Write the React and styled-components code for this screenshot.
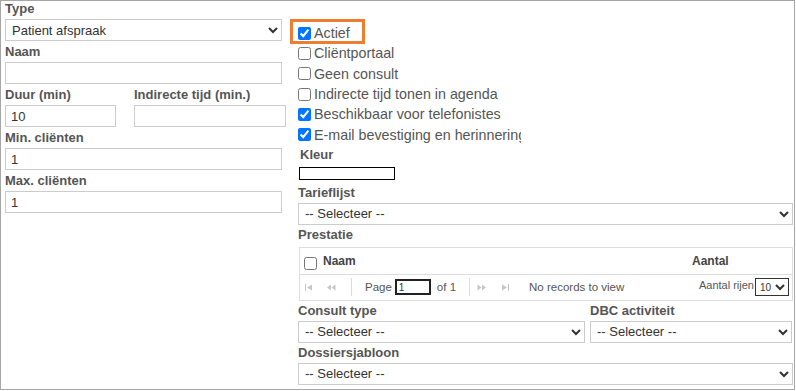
import React from "react";
import styled, { createGlobalStyle } from "styled-components";

const GlobalStyle = createGlobalStyle`
  html, body {
    margin: 0;
    padding: 0;
    background: #fff;
  }
  body {
    font-family: Arial, "Liberation Sans", sans-serif;
  }
`;

const Frame = styled.div`
  box-sizing: border-box;
  width: 795px;
  height: 390px;
  border: 1px solid #a6a6a6;
  padding-left: 4px;
  display: flex;
  gap: 11px;
  overflow: hidden;
`;

const LeftCol = styled.div`
  width: 282px;
  display: flex;
  flex-direction: column;
  gap: 3px;
`;

const RightCol = styled.div`
  width: 495px;
  padding-top: 22px;
  display: flex;
  flex-direction: column;
`;

const Field = styled.div`
  display: flex;
  flex-direction: column;
  width: ${(p) => p.$width || "auto"};
  margin-top: ${(p) => p.$top || 0}px;
`;

const Label = styled.label`
  display: block;
  font-size: 13px;
  font-weight: bold;
  line-height: 16px;
  margin-bottom: 2px;
  padding-left: ${(p) => p.$indent || 0}px;
  color: #555;
  white-space: nowrap;
`;

const TextInput = styled.input`
  box-sizing: border-box;
  height: 22px;
  width: 100%;
  border: 1px solid #ccc;
  border-radius: 0;
  padding: 0 5px;
  font-family: Arial, "Liberation Sans", sans-serif;
  font-size: 13px;
  color: #333;
  outline: none;
`;

const Select = styled.select`
  box-sizing: border-box;
  height: 22px;
  width: 100%;
  border: 1px solid #ccc;
  border-radius: 0;
  background: #fff;
  padding: 0 2px;
  font-family: Arial, "Liberation Sans", sans-serif;
  font-size: 13px;
  color: #333;
  outline: none;
`;

const TwoCols = styled.div`
  display: grid;
  grid-template-columns: ${(p) => p.$cols};
  column-gap: ${(p) => p.$gap}px;
`;

const CheckList = styled.div`
  display: flex;
  flex-direction: column;
`;

const CheckRow = styled.label`
  display: flex;
  align-items: center;
  width: 223px;
  height: 20.34px;
  overflow: hidden;
  font-size: 14.3px;
  color: #555;
  white-space: nowrap;
`;

const Highlight = styled.div`
  position: relative;
  &::after {
    content: "";
    position: absolute;
    left: -8px;
    top: -4.3px;
    width: 69px;
    height: 19px;
    border: 3px solid #ed7d31;
    pointer-events: none;
  }
`;

const Check = styled.input.attrs({ type: "checkbox" })`
  width: 13px;
  height: 13px;
  margin: 0 3px 0 0;
  flex: none;
`;

const Swatch = styled.div`
  box-sizing: border-box;
  width: 96px;
  height: 13px;
  margin: 2px 0 5px 1px;
  border: 1px solid #000;
  background: #fff;
`;

const Grid = styled.div`
  box-sizing: border-box;
  width: 494px;
  margin: 2px 0 2px 1px;
  border: 1px solid #ddd;
`;

const GridHead = styled.div`
  display: flex;
  align-items: center;
  height: 26px;
  padding-left: 4px;
  border-bottom: 1px solid #ddd;
  font-size: 12px;
  font-weight: bold;
  color: #444;
`;

const HeadCheck = styled(Check)`
  margin: 6px 6px 0 0;
`;

const HeadCell = styled.div`
  flex: ${(p) => (p.$grow ? 1 : "none")};
  width: ${(p) => (p.$w ? `${p.$w}px` : "auto")};
`;

const Pager = styled.div`
  display: flex;
  align-items: center;
  height: 25px;
  padding: 0 3px 0 1px;
  font-size: 11.5px;
  color: #555;
  white-space: nowrap;
`;

const PagerIcon = styled.span`
  display: flex;
  justify-content: center;
  align-items: center;
  width: 15px;
  height: 16px;
  margin-left: ${(p) => p.$ml || 0}px;
  color: #c6c6c6;
`;

const Sep = styled.span`
  width: 1px;
  height: 18px;
  background: #ddd;
  margin-left: ${(p) => p.$ml || 0}px;
`;

const PagerText = styled.span`
  margin-left: ${(p) => p.$ml || 0}px;
  font-size: ${(p) => p.$size || 11.5}px;
  margin-bottom: ${(p) => p.$raise || 0}px;
`;

const PageInput = styled.input`
  box-sizing: border-box;
  width: 36px;
  height: 16px;
  margin-left: 3px;
  border: 2px solid #222;
  padding: 0 2px;
  font-family: Arial, "Liberation Sans", sans-serif;
  font-size: 10px;
  color: #333;
  outline: none;
`;

const Spacer = styled.span`
  flex: 1;
`;

const RowsSelect = styled.select`
  box-sizing: border-box;
  width: 34px;
  height: 18px;
  margin-left: 1px;
  border: 1px solid #333;
  border-radius: 0;
  background: #fff;
  padding: 0;
  font-family: Arial, "Liberation Sans", sans-serif;
  font-size: 10px;
  color: #333;
`;

const SeekFirst = () => (
  <svg width="8" height="7" viewBox="0 0 8 7">
    <rect x="0" y="0" width="1" height="7" fill="currentColor" />
    <path d="M2 3.5 L7 0.5 L7 6.5 Z" fill="currentColor" />
  </svg>
);

const SeekPrev = () => (
  <svg width="9" height="7" viewBox="0 0 9 7">
    <path d="M0 3.5 L4 0.5 L4 6.5 Z M4.5 3.5 L8.5 0.5 L8.5 6.5 Z" fill="currentColor" />
  </svg>
);

const SeekNext = () => (
  <svg width="9" height="7" viewBox="0 0 9 7">
    <path d="M0.5 0.5 L4.5 3.5 L0.5 6.5 Z M5 0.5 L9 3.5 L5 6.5 Z" fill="currentColor" />
  </svg>
);

const SeekEnd = () => (
  <svg width="8" height="7" viewBox="0 0 8 7">
    <path d="M0 0.5 L5 3.5 L0 6.5 Z" fill="currentColor" />
    <rect x="6" y="0" width="1" height="7" fill="currentColor" />
  </svg>
);

const options = ["Actief", "Cliëntportaal", "Geen consult", "Indirecte tijd tonen in agenda", "Beschikbaar voor telefonistes", "E-mail bevestiging en herinnering"];
const checked = { Actief: true, "Beschikbaar voor telefonistes": true, "E-mail bevestiging en herinnering": true };

export default function App() {
  return (
    <>
      <GlobalStyle />
      <Frame>
        <LeftCol>
          <Field $width="277px">
            <Label>Type</Label>
            <Select defaultValue="pa">
              <option value="pa">Patient afspraak</option>
            </Select>
          </Field>
          <Field $width="277px">
            <Label>Naam</Label>
            <TextInput defaultValue="" />
          </Field>
          <TwoCols $cols="111px 152px" $gap={18}>
            <Field>
              <Label>Duur (min)</Label>
              <TextInput defaultValue="10" />
            </Field>
            <Field>
              <Label>Indirecte tijd (min.)</Label>
              <TextInput defaultValue="" />
            </Field>
          </TwoCols>
          <Field $width="277px">
            <Label>Min. cliënten</Label>
            <TextInput defaultValue="1" />
          </Field>
          <Field $width="277px">
            <Label>Max. cliënten</Label>
            <TextInput defaultValue="1" />
          </Field>
        </LeftCol>

        <RightCol>
          <CheckList>
            {options.map((o) => {
              const row = (
                <CheckRow key={o}>
                  <Check defaultChecked={!!checked[o]} />
                  {o}
                </CheckRow>
              );
              return o === "Actief" ? <Highlight key={o}>{row}</Highlight> : row;
            })}
          </CheckList>

          <Field $top={1.6}>
            <Label $indent={2}>Kleur</Label>
            <Swatch />
          </Field>

          <Field>
            <Label>Tarieflijst</Label>
            <Select defaultValue="">
              <option value="">-- Selecteer --</option>
            </Select>
          </Field>

          <Field $top={2}>
            <Label>Prestatie</Label>
            <Grid>
              <GridHead>
                <HeadCheck />
                <HeadCell $grow>Naam</HeadCell>
                <HeadCell $w={100}>Aantal</HeadCell>
              </GridHead>
              <Pager>
                <PagerIcon><SeekFirst /></PagerIcon>
                <PagerIcon $ml={8}><SeekPrev /></PagerIcon>
                <Sep $ml={12} />
                <PagerText $ml={13}>Page</PagerText>
                <PageInput defaultValue="1" />
                <PagerText $ml={6}>of 1</PagerText>
                <Sep $ml={13} />
                <PagerIcon $ml={4}><SeekNext /></PagerIcon>
                <PagerIcon $ml={9}><SeekEnd /></PagerIcon>
                <PagerText $ml={16}>No records to view</PagerText>
                <Spacer />
                <PagerText $size={11} $raise={4}>Aantal rijen</PagerText>
                <RowsSelect defaultValue="10">
                  <option value="10">10</option>
                </RowsSelect>
              </Pager>
            </Grid>
          </Field>

          <TwoCols $cols="287px 202px" $gap={5}>
            <Field>
              <Label>Consult type</Label>
              <Select defaultValue="">
                <option value="">-- Selecteer --</option>
              </Select>
            </Field>
            <Field>
              <Label>DBC activiteit</Label>
              <Select defaultValue="">
                <option value="">-- Selecteer --</option>
              </Select>
            </Field>
          </TwoCols>

          <Field $top={2}>
            <Label>Dossiersjabloon</Label>
            <Select defaultValue="">
              <option value="">-- Selecteer --</option>
            </Select>
          </Field>
        </RightCol>
      </Frame>
    </>
  );
}
